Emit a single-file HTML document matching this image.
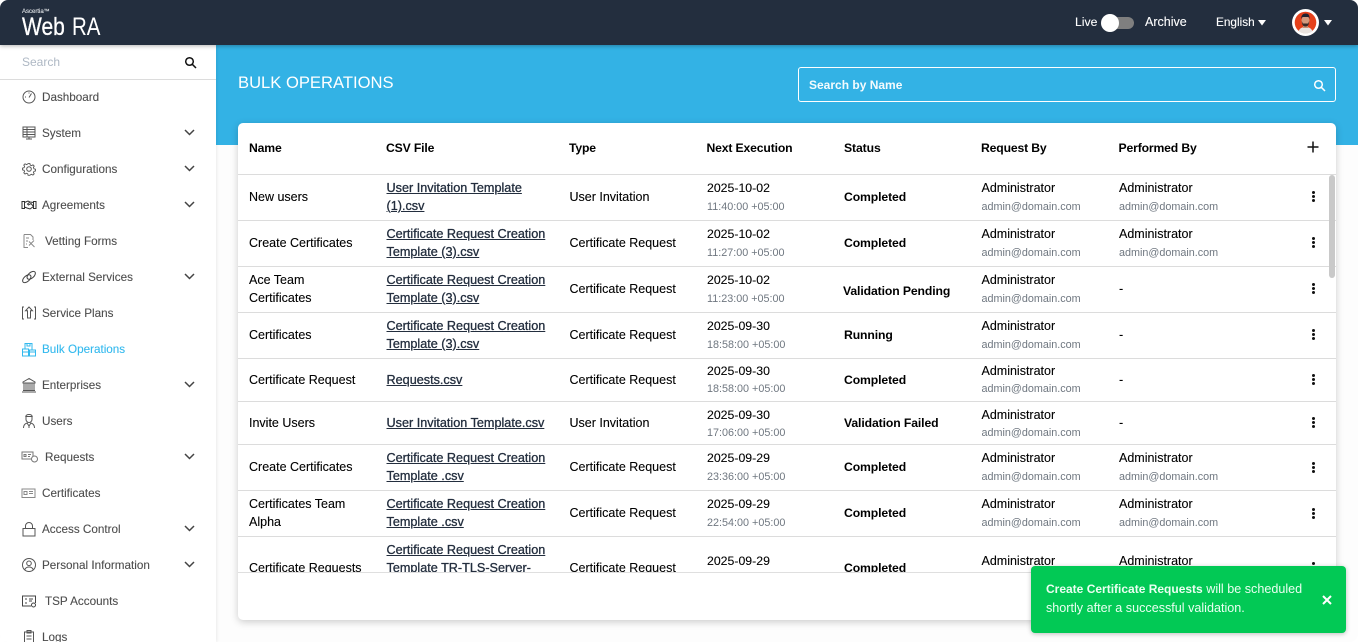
<!DOCTYPE html>
<html><head><meta charset="utf-8"><title>Bulk Operations</title>
<style>
html,body{margin:0;padding:0;background:#fff;width:1358px;height:642px;overflow:hidden}
body{font-family:"Liberation Sans",Arial,sans-serif;color:#000;position:relative}
#app{position:absolute;left:0;top:0;width:1358px;height:642px;overflow:hidden;border-radius:8px;background:#fdfdfd}
.abs,#app i{position:absolute}
#app i{font-style:normal;white-space:nowrap;line-height:16px;font-size:12.5px;-webkit-text-stroke:.1px}
#top{position:absolute;left:0;top:0;width:1358px;height:45px;background:#232e3e;box-shadow:0 1px 4px rgba(0,0,0,.3);z-index:5}
#blue{position:absolute;left:216px;top:45px;width:1142px;height:100px;background:#33b2e5}
#side{position:absolute;left:0;top:45px;width:216px;height:597px;background:#fff;overflow:hidden;box-shadow:1px 0 3px rgba(0,0,0,.08);z-index:3}
#card{position:absolute;left:238px;top:123px;width:1098px;height:497px;background:#fff;border-radius:5px;box-shadow:0 2px 8px rgba(0,0,0,.2)}
.n{left:42px;color:#4d4d4d!important;font-size:11.7px!important;margin-top:1px}
.n2{left:45px}
.ic{position:absolute;left:21px;width:16px;height:16px;fill:none;stroke:#555;stroke-width:1}
.ch{position:absolute;left:184px;width:11px;height:7px;fill:none;stroke:#444;stroke-width:1.5}
.h{font-weight:bold;font-size:12.2px!important;top:140px;-webkit-text-stroke:0!important;letter-spacing:-.15px}
.c1{left:249px}.c2{left:386.5px;color:#232e3e!important;text-decoration:underline;-webkit-text-stroke:.3px!important;font-size:12.65px!important}.c3{left:569.5px}.c4{left:707px;font-size:12.3px!important}.c5{left:844px;font-weight:bold;font-size:12.2px!important;-webkit-text-stroke:0!important;letter-spacing:-.1px}.c6{left:981.5px}.c7{left:1119px}
.s{color:#6f7780!important;font-size:10.8px!important;-webkit-text-stroke:0!important;margin-top:1px}
.l{position:absolute;left:238px;width:1098px;height:1px;background:#dcdcdc}
.d{position:absolute;left:1312px;width:3px;height:3px;border-radius:50%;background:#111;box-shadow:0 4px 0 #111,0 8px 0 #111}
#toast{position:absolute;left:1031px;top:566px;width:315px;height:67px;background:#02c955;border-radius:4px;box-shadow:0 1px 5px rgba(0,0,0,.25);z-index:9}
</style></head><body>
<div id="app">
<div id="blue"></div>
<div id="top">
<i style="left:22px;top:4px;font-size:6px;color:#e2e5e8;-webkit-text-stroke:.1px">Ascertia™</i>
<i style="left:22px;top:17px;font-size:25px;line-height:20px;color:#fff;transform:scaleX(.84);transform-origin:0 0;-webkit-text-stroke:.3px">Web</i>
<i style="left:71.5px;top:17px;font-size:25px;line-height:20px;color:#fff;transform:scaleX(.82);transform-origin:0 0;-webkit-text-stroke:0">RA</i>
<i style="left:1075px;top:14px;color:#fff;font-size:12.2px">Live</i>
<div class="abs" style="left:1105px;top:17px;width:29px;height:12px;border-radius:6px;background:#7f7f7f"></div>
<div class="abs" style="left:1101px;top:14px;width:18px;height:18px;border-radius:50%;background:#fff"></div>
<i style="left:1145px;top:14px;color:#fff;font-size:12.5px">Archive</i>
<i style="left:1216px;top:14px;color:#fff;font-size:11.8px">English</i>
<svg class="abs" style="left:1258px;top:20px" width="8" height="6"><path d="M0 0H8L4 5.5Z" fill="#fff"/></svg>
<svg class="abs" style="left:1292px;top:9px" width="27" height="27" viewBox="0 0 27 27"><circle cx="13.5" cy="13.5" r="13.5" fill="#fff"/><circle cx="13.5" cy="13.5" r="10.8" fill="#e5401a"/><path d="M6.5 22c1.500-3 4-4 7-4s5.500 1 7 4a10.800 10.800 0 0 1-14 0Z" fill="#e9e3df"/><rect x="11" y="14" width="5" height="5" fill="#c98f72"/><ellipse cx="13.500" cy="11.500" rx="4" ry="5" fill="#d39a7d"/><path d="M9.300 10c-.3-4 2-5.500 4.500-5.500s4 1.500 3.700 5.500l-1-2h-6Z" fill="#1f2230"/><path d="M9.800 12c0 4 1.500 5.500 3.700 5.500s3.700-1.500 3.700-5.500l-1 2.500h-5.400Z" fill="#3a2a28"/></svg>
<svg class="abs" style="left:1324px;top:20px" width="8" height="6"><path d="M0 0H8L4 5.500Z" fill="#fff"/></svg>
</div>

<div id="side">
<div class="abs" style="left:0;top:34px;width:216px;height:1px;background:#dcdcdc"></div>
<i style="left:22px;top:9px;color:#aeb8c4;font-size:12px;-webkit-text-stroke:0">Search</i>
<svg class="abs" style="left:184px;top:11px;fill:none;stroke:#111;stroke-width:1.500" width="13" height="13"><circle cx="5.500" cy="5.500" r="3.800"/><path d="M8.300 8.300L12 12"/></svg>

<svg class="ic" style="top:44px" viewBox="0 0 16 16"><circle cx="8" cy="8" r="6"/><path d="M8 8.500L10.500 4.500M4 8h1M8 3.500v1"/></svg>
<i class="n" style="top:44px">Dashboard</i>
<svg class="ic" style="top:80px" viewBox="0 0 16 16"><path d="M2 2h12v10H2zM2 4.500h12M2 7h12M2 9.500h12M6 2v10M8 12v2M5 14h6"/></svg>
<i class="n" style="top:80px">System</i>
<svg class="ch" style="top:84px" viewBox="0 0 11 7"><path d="M1 1l4.500 4.500L10 1"/></svg>
<svg class="ic" style="top:116px" viewBox="0 0 16 16"><circle cx="8" cy="8" r="2.300"/><path d="M7 2h2l.4 1.700 1.500.6 1.500-.9 1.400 1.400-.9 1.500.6 1.500 1.700.4v2l-1.700.4-.6 1.300.9 1.500-1.400 1.400-1.500-.9-1.500.6L9 15H7l-.4-1.700-1.500-.6-1.500.9-1.400-1.400.9-1.500-.6-1.300L.8 9V7l1.700-.4.6-1.500-.9-1.500 1.400-1.400 1.500.9 1.500-.6Z" transform="translate(.8 .8) scale(.9)"/></svg>
<i class="n" style="top:116px">Configurations</i>
<svg class="ch" style="top:120px" viewBox="0 0 11 7"><path d="M1 1l4.500 4.500L10 1"/></svg>
<svg class="ic" style="top:152px;stroke:#333" viewBox="0 0 16 16"><path d="M1 4.500h2.500v7H1zM15 4.500h-2.500v7H15zM3.500 5.500L7 4l2 1-2.500 2 1 1 2.500-1.500 2.500 3L9 12 6 11 3.500 10M12.500 5.500L9 5"/></svg>
<i class="n" style="top:152px">Agreements</i>
<svg class="ch" style="top:156px" viewBox="0 0 11 7"><path d="M1 1l4.500 4.500L10 1"/></svg>
<svg class="ic" style="top:188px;stroke:#8a8a8a" viewBox="0 0 16 16"><path d="M3 1.500h6.500l2.500 2.500V7M7 14.500H3V1.500M5 5h3M5 8h2M5 11h1M8 8.500l5.500 5.500M13 7.500l-5 5"/></svg>
<i class="n n2" style="top:188px">Vetting Forms</i>
<svg class="ic" style="top:224px;stroke:#444" viewBox="0 0 16 16"><ellipse cx="5.800" cy="9.700" rx="5" ry="2.800" transform="rotate(-42 5.800 9.700)"/><ellipse cx="10.200" cy="6.300" rx="5" ry="2.800" transform="rotate(-42 10.200 6.300)"/></svg>
<i class="n" style="top:224px">External Services</i>
<svg class="ch" style="top:228px" viewBox="0 0 11 7"><path d="M1 1l4.500 4.500L10 1"/></svg>
<svg class="ic" style="top:260px" viewBox="0 0 16 16"><path d="M3 2H1.500v12H3M13 2h1.500v12H13M8 2L4.500 5.800H6.500V13h3V5.800h2Z"/></svg>
<i class="n" style="top:260px">Service Plans</i>
<svg class="ic" style="top:296px;stroke:#33b9ee" viewBox="0 0 16 16"><path d="M1.500 8h6v7h-6zM8.500 9h6v6h-6zM4 8V2.500h7V9M6 2.500V5h3V2.500M1.500 11h6M8.500 11h6"/></svg>
<i class="n" style="top:296px;color:#33b9ee!important">Bulk Operations</i>
<svg class="ic" style="top:332px" viewBox="0 0 16 16"><path d="M8 1.500L2 5v1h12V5ZM3 6.500V13M5 6.500V13M7 6.500V13M9 6.500V13M11 6.500V13M13 6.500V13M2 13.500h12M1 15h14"/></svg>
<i class="n" style="top:332px">Enterprises</i>
<svg class="ch" style="top:336px" viewBox="0 0 11 7"><path d="M1 1l4.500 4.500L10 1"/></svg>
<svg class="ic" style="top:368px" viewBox="0 0 16 16"><path d="M4.800 3.500C5 2 6.500 1.500 8 1.500s3 .5 3.200 2zM5 4v2.500C5 8 6.500 9.500 8 9.500S11 8 11 6.500V4M2.500 15c0-3 2-4.500 3.500-5l2 3 2-3c1.500.5 3.500 2 3.500 5M8 13v2"/></svg>
<i class="n" style="top:368px">Users</i>
<svg class="ic" style="top:404px;width:18px;stroke:#777" viewBox="0 0 18 16"><path d="M1 3h11v7H1zM3 5.500h2v2H3zM7 5.500h3M7 7.500h2"/><circle cx="13.500" cy="10" r="3" fill="#fff"/></svg>
<i class="n n2" style="top:404px">Requests</i>
<svg class="ch" style="top:408px" viewBox="0 0 11 7"><path d="M1 1l4.500 4.500L10 1"/></svg>
<svg class="ic" style="top:440px;stroke:#888" viewBox="0 0 16 16"><path d="M1 4h13v8.500H1zM3 6.500h3v3H3zM8 6.500h4M8 8.500h4"/></svg>
<i class="n" style="top:440px">Certificates</i>
<svg class="ic" style="top:476px" viewBox="0 0 16 16"><path d="M2 7.500h12V15H2zM4.500 7.500V5a3.500 3.500 0 0 1 7 0v2.500"/></svg>
<i class="n" style="top:476px">Access Control</i>
<svg class="ch" style="top:480px" viewBox="0 0 11 7"><path d="M1 1l4.500 4.500L10 1"/></svg>
<svg class="ic" style="top:512px" viewBox="0 0 16 16"><circle cx="8" cy="8" r="6.500"/><circle cx="8" cy="6.300" r="2.300"/><path d="M3.800 12.500c1-2 2.500-2.500 4.200-2.500s3.200.5 4.200 2.500"/></svg>
<i class="n" style="top:512px">Personal Information</i>
<svg class="ch" style="top:516px" viewBox="0 0 11 7"><path d="M1 1l4.500 4.500L10 1"/></svg>
<svg class="ic" style="top:548px;width:17px;stroke:#444" viewBox="0 0 17 16"><path d="M10 13H1.500V3h13v7M4 6h2M4 10h2M8 6h4M8 8h3"/><circle cx="12.500" cy="12" r="2"/></svg>
<i class="n n2" style="top:548px">TSP Accounts</i>
<svg class="ic" style="top:584px" viewBox="0 0 16 16"><path d="M3.500 3h9v12h-9zM6 1.500h4V4H6zM5.500 7h5M5.500 10h5"/></svg>
<i class="n" style="top:584px">Logs</i>
</div>

<i style="left:238px;top:73px;font-size:16.6px;line-height:20px;color:#fff;-webkit-text-stroke:0">BULK OPERATIONS</i>
<div class="abs" style="left:798px;top:67px;width:536px;height:33px;border:1px solid #fff;border-radius:3px"></div>
<i style="left:809px;top:77px;color:#fff;font-weight:bold;font-size:12px;-webkit-text-stroke:0;opacity:.95">Search by Name</i>
<svg class="abs" style="left:1313px;top:79px;fill:none;stroke:#fff;stroke-width:1.500" width="13" height="13"><circle cx="5.500" cy="5.500" r="3.800"/><path d="M8.300 8.300L12 12"/></svg>

<div id="card"></div>
<i class="h c1">Name</i><i class="h" style="left:386px">CSV File</i><i class="h" style="left:569px">Type</i><i class="h" style="left:706.5px">Next Execution</i><i class="h c5" style="top:140px">Status</i><i class="h" style="left:981px">Request By</i><i class="h" style="left:1118.5px">Performed By</i>
<svg class="abs" style="left:1307px;top:141px" width="12" height="12"><path d="M6 0.500V11.500M0.500 6H11.500" stroke="#111" stroke-width="1.500"/></svg>
<div class="l" style="top:174px"></div>

<div class="abs" style="left:0;top:0;width:1358px;height:572px;overflow:hidden">
<!-- 1 -->
<i class="c1" style="top:189px">New users</i><i class="c2" style="top:180px">User Invitation Template</i><i class="c2" style="top:198px">(1).csv</i><i class="c3" style="top:189px">User Invitation</i><i class="c4" style="top:180px">2025-10-02</i><i class="c4 s" style="top:198px">11:40:00 +05:00</i><i class="c5" style="top:189px">Completed</i><i class="c6" style="top:180px">Administrator</i><i class="c6 s" style="top:198px">admin@domain.com</i><i class="c7" style="top:180px">Administrator</i><i class="c7 s" style="top:198px">admin@domain.com</i><div class="d" style="top:191px"></div>
<div class="l" style="top:220px"></div>
<!-- 2 -->
<i class="c1" style="top:235px">Create Certificates</i><i class="c2" style="top:226px">Certificate Request Creation</i><i class="c2" style="top:244px">Template (3).csv</i><i class="c3" style="top:235px">Certificate Request</i><i class="c4" style="top:226px">2025-10-02</i><i class="c4 s" style="top:244px">11:27:00 +05:00</i><i class="c5" style="top:235px">Completed</i><i class="c6" style="top:226px">Administrator</i><i class="c6 s" style="top:244px">admin@domain.com</i><i class="c7" style="top:226px">Administrator</i><i class="c7 s" style="top:244px">admin@domain.com</i><div class="d" style="top:237px"></div>
<div class="l" style="top:266px"></div>
<!-- 3 -->
<i class="c1" style="top:272px">Ace Team</i><i class="c1" style="top:290px">Certificates</i><i class="c2" style="top:272px">Certificate Request Creation</i><i class="c2" style="top:290px">Template (3).csv</i><i class="c3" style="top:281px">Certificate Request</i><i class="c4" style="top:272px">2025-10-02</i><i class="c4 s" style="top:290px">11:23:00 +05:00</i><i class="c5" style="top:283px;left:843px">Validation Pending</i><i class="c6" style="top:272px">Administrator</i><i class="c6 s" style="top:290px">admin@domain.com</i><i class="c7" style="top:281px">-</i><div class="d" style="top:283px"></div>
<div class="l" style="top:312px"></div>
<!-- 4 -->
<i class="c1" style="top:327px">Certificates</i><i class="c2" style="top:318px">Certificate Request Creation</i><i class="c2" style="top:336px">Template (3).csv</i><i class="c3" style="top:327px">Certificate Request</i><i class="c4" style="top:318px">2025-09-30</i><i class="c4 s" style="top:336px">18:58:00 +05:00</i><i class="c5" style="top:327px">Running</i><i class="c6" style="top:318px">Administrator</i><i class="c6 s" style="top:336px">admin@domain.com</i><i class="c7" style="top:327px">-</i><div class="d" style="top:329px"></div>
<div class="l" style="top:358px"></div>
<!-- 5 -->
<i class="c1" style="top:372px">Certificate Request</i><i class="c2" style="top:372px">Requests.csv</i><i class="c3" style="top:372px">Certificate Request</i><i class="c4" style="top:363px">2025-09-30</i><i class="c4 s" style="top:380px">18:58:00 +05:00</i><i class="c5" style="top:372px">Completed</i><i class="c6" style="top:363px">Administrator</i><i class="c6 s" style="top:380px">admin@domain.com</i><i class="c7" style="top:372px">-</i><div class="d" style="top:374px"></div>
<div class="l" style="top:401px"></div>
<!-- 6 -->
<i class="c1" style="top:415px">Invite Users</i><i class="c2" style="top:415px">User Invitation Template.csv</i><i class="c3" style="top:415px">User Invitation</i><i class="c4" style="top:407px">2025-09-30</i><i class="c4 s" style="top:424px">17:06:00 +05:00</i><i class="c5" style="top:415px">Validation Failed</i><i class="c6" style="top:407px">Administrator</i><i class="c6 s" style="top:424px">admin@domain.com</i><i class="c7" style="top:415px">-</i><div class="d" style="top:417px"></div>
<div class="l" style="top:444px"></div>
<!-- 7 -->
<i class="c1" style="top:459px">Create Certificates</i><i class="c2" style="top:450px">Certificate Request Creation</i><i class="c2" style="top:468px">Template .csv</i><i class="c3" style="top:459px">Certificate Request</i><i class="c4" style="top:450px">2025-09-29</i><i class="c4 s" style="top:468px">23:36:00 +05:00</i><i class="c5" style="top:459px">Completed</i><i class="c6" style="top:450px">Administrator</i><i class="c6 s" style="top:468px">admin@domain.com</i><i class="c7" style="top:450px">Administrator</i><i class="c7 s" style="top:468px">admin@domain.com</i><div class="d" style="top:462px"></div>
<div class="l" style="top:490px"></div>
<!-- 8 -->
<i class="c1" style="top:496px">Certificates Team</i><i class="c1" style="top:514px">Alpha</i><i class="c2" style="top:496px">Certificate Request Creation</i><i class="c2" style="top:514px">Template .csv</i><i class="c3" style="top:505px">Certificate Request</i><i class="c4" style="top:496px">2025-09-29</i><i class="c4 s" style="top:514px">22:54:00 +05:00</i><i class="c5" style="top:505px">Completed</i><i class="c6" style="top:496px">Administrator</i><i class="c6 s" style="top:514px">admin@domain.com</i><i class="c7" style="top:496px">Administrator</i><i class="c7 s" style="top:514px">admin@domain.com</i><div class="d" style="top:508px"></div>
<div class="l" style="top:536px"></div>
<!-- 9 -->
<i class="c1" style="top:560px">Certificate Requests</i><i class="c2" style="top:542px">Certificate Request Creation</i><i class="c2" style="top:560px;text-decoration:none">Template TR-TLS-Server-</i><i class="c3" style="top:560px">Certificate Request</i><i class="c4" style="top:553px">2025-09-29</i><i class="c5" style="top:560px">Completed</i><i class="c6" style="top:553px">Administrator</i><i class="c7" style="top:553px">Administrator</i><div class="d" style="top:562px"></div>
</div>
<div class="l" style="top:572px;background:#dfdfdf"></div>
<div class="abs" style="left:1329px;top:175px;width:6px;height:103px;background:#c9c9c9;border-radius:3px"></div>

<div id="toast">
<i style="left:15px;top:15px;color:#eafff1;font-size:12.6px;-webkit-text-stroke:0"><b style="font-size:12px">Create Certificate Requests</b> will be scheduled</i>
<i style="left:15px;top:34px;color:#eafff1;font-size:12.6px;-webkit-text-stroke:0">shortly after a successful validation.</i>
<svg class="abs" style="left:291px;top:29px" width="10" height="10"><path d="M1 1L9 9M9 1L1 9" stroke="#fff" stroke-width="2"/></svg>
</div>
</div>
</body></html>
